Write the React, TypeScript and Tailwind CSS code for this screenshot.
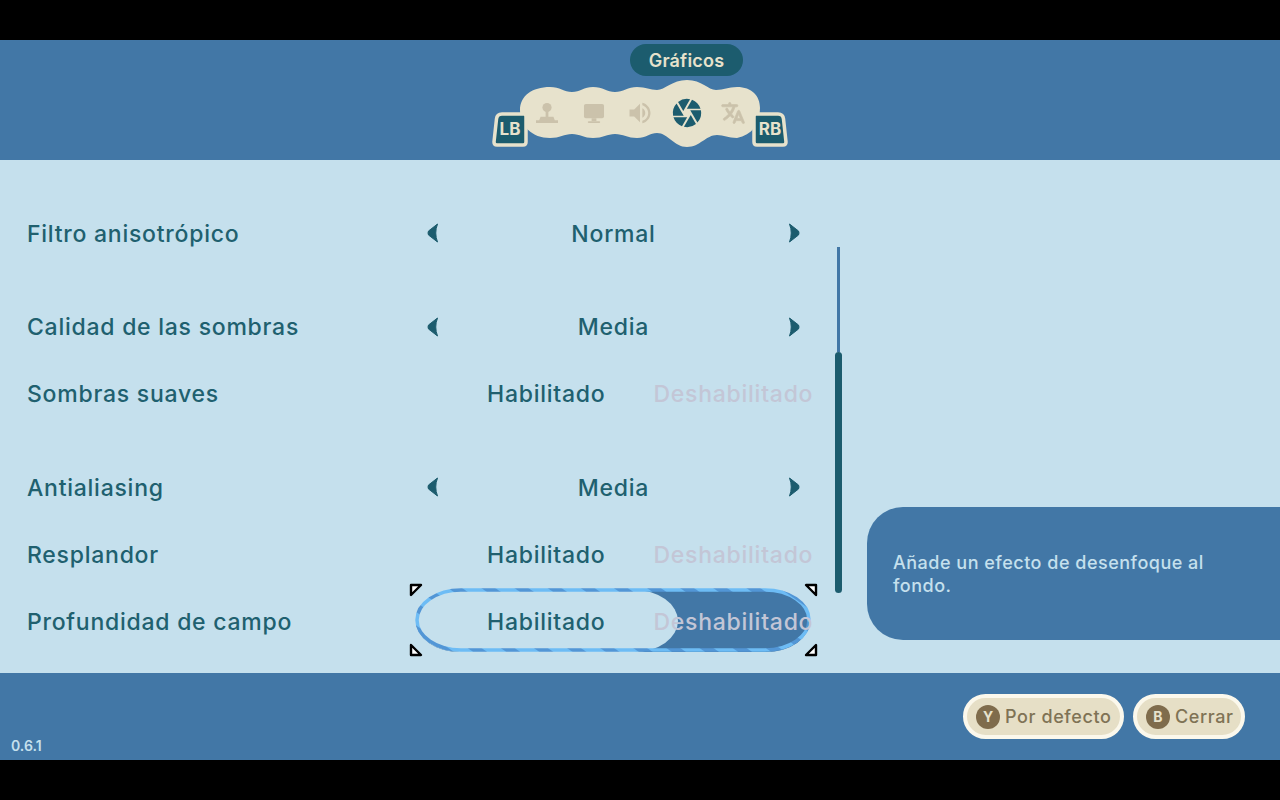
import { IoLanguage } from "react-icons/io5";
import { MdCamera, MdVolumeUp } from "react-icons/md";

type Row = {
  label: string;
  kind: "select" | "toggle";
  value?: string;
  gap?: boolean;
  active?: boolean;
};

const rows: Row[] = [
  { label: "Filtro anisotrópico", kind: "select", value: "Normal" },
  { label: "Calidad de las sombras", kind: "select", value: "Media", gap: true },
  { label: "Sombras suaves", kind: "toggle" },
  { label: "Antialiasing", kind: "select", value: "Media", gap: true },
  { label: "Resplandor", kind: "toggle" },
  { label: "Profundidad de campo", kind: "toggle", active: true },
];

function Arrow({ flip }: { flip?: boolean }) {
  return (
    <svg width="12" height="20" viewBox="0 0 12 20" className={flip ? "rotate-180" : ""}>
      <path
        d="M10.5 1 L1.5 8 Q0.5 10 1.5 12 L10.5 19 Q7 10 10.5 1 Z"
        fill="#1c5c6e"
        stroke="#1c5c6e"
        strokeLinejoin="round"
      />
    </svg>
  );
}

function Corner({ className }: { className: string }) {
  return (
    <svg width="14" height="14" viewBox="0 0 14 14" className={`absolute ${className}`}>
      <path
        d="M2 2 L12 2 L2 12 Z"
        fill="#ffffff"
        stroke="#000000"
        strokeWidth="2.4"
        strokeLinejoin="round"
      />
    </svg>
  );
}

function Toggle({ active }: { active?: boolean }) {
  return (
    <div className="relative flex h-[62px] w-full items-center">
      {active && (
        <>
          <div className="absolute left-px right-[2px] top-0 h-full overflow-hidden rounded-[44px/31px] bg-[#4277a6]">
            <div className="h-full w-[262px] rounded-[44px/31px] bg-[#c5e0ed]" />
          </div>
          <svg
            width="396"
            height="64"
            viewBox="0 0 396 64"
            className="absolute left-0 top-[-2px]"
          >
            <defs>
              <pattern
                id="ring-stripes"
                width="19"
                height="19"
                patternUnits="userSpaceOnUse"
                patternTransform="rotate(-55)"
              >
                <rect width="19" height="19" fill="#6dbcf5" />
                <rect width="8" height="19" fill="#5296d6" />
              </pattern>
            </defs>
            <rect
              x="2"
              y="2"
              width="392"
              height="60"
              rx="44"
              ry="30"
              fill="none"
              stroke="url(#ring-stripes)"
              strokeWidth="3.5"
            />
          </svg>
          <Corner className="-left-[6px] -top-[7px]" />
          <Corner className="-right-[6px] -top-[7px] rotate-90" />
          <Corner className="-bottom-[5px] -left-[6px] -rotate-90" />
          <Corner className="-bottom-[5px] -right-[6px] rotate-180" />
        </>
      )}
      <div className="relative flex items-center gap-[48px] pl-[72px] pt-[2px]">
        <span className="whitespace-nowrap text-[#20606f]">Habilitado</span>
        <span className="whitespace-nowrap text-[#c3c6d6]">Deshabilitado</span>
      </div>
    </div>
  );
}

function Select({ value }: { value?: string }) {
  return (
    <div className="flex w-full items-center justify-between px-[12px]">
      <Arrow />
      <span className="pt-[2px] text-[#20606f]">{value}</span>
      <Arrow flip />
    </div>
  );
}

function Plate({ text, flip }: { text: string; flip?: boolean }) {
  return (
    <div className="relative flex h-[35px] w-[36px] items-center justify-center">
      <svg
        width="36"
        height="35"
        viewBox="0 0 36 35"
        className={`absolute left-0 top-0 ${flip ? "-scale-x-100" : ""}`}
      >
        <path
          d="M10 2 L32 2 Q34 2 34 5 L34 30 Q34 33 31 33 L5 33 Q2 33 2 30 L4.5 7 Q5 2 10 2 Z"
          fill="#1c5c6e"
          stroke="#e7e2cc"
          strokeWidth="3.5"
          strokeLinejoin="round"
        />
      </svg>
      <span className="relative text-[17px] font-bold text-[#e7e2cc]">{text}</span>
    </div>
  );
}

function TabWave() {
  return (
    <svg width="240" height="72" viewBox="520 78 240 72" className="absolute left-0 top-0">
      <path
        fill="#e7e2cc"
        d="M520 110 C520 96 532 87 550 87 C560 87 564 92 572 92 C580 92 584 87 593 87 C603 87 607 92 615 92 C623 92 628 87 637 87 C646 87 650 90 657 90 C665 90 672 80 687 80 C702 80 708 90 716 90 C724 90 728 87 737 87 C752 87 760 96 760 108 C760 124 752 135 737 138 C728 138 724 135 717 135 C706 135 700 147 687 147 C674 147 668 133 657 133 C650 133 646 138 637 138 C628 138 623 134 615 134 C607 134 603 138 593 138 C584 138 580 134 572 134 C564 134 560 138 550 138 C532 138 520 126 520 110 Z"
      />
    </svg>
  );
}

function Tabs() {
  return (
    <div className="flex items-end">
      <div className="z-10 -mr-[8px] pb-[3px]">
        <Plate text="LB" />
      </div>
      <div className="relative h-[72px] w-[240px]">
        <TabWave />
        <div className="relative flex h-full items-center pb-[2px] pl-[4px]">
          <div className="flex w-[46.5px] justify-center">
            <svg width="22" height="24" viewBox="0 0 24 24" fill="#cbc2ab">
              <circle cx="12" cy="6" r="5" />
              <rect x="10.5" y="8" width="3" height="10" />
              <path d="M5 16 H19 L20.5 20 H24 V23 H0 V20 H3.5 Z" />
            </svg>
          </div>
          <div className="flex w-[46.5px] justify-center">
            <svg width="22" height="21" viewBox="0 0 23 22" fill="#cbc2ab">
              <rect x="1" y="1" width="21" height="15" rx="2" />
              <rect x="9" y="16" width="5" height="3" />
              <rect x="5" y="19" width="13" height="2" rx="1" />
            </svg>
          </div>
          <div className="flex w-[46.5px] justify-center">
            <MdVolumeUp size={28} color="#cbc2ab" />
          </div>
          <div className="flex w-[46.5px] justify-center">
            <MdCamera size={34} color="#1c5c6e" />
          </div>
          <div className="flex w-[46.5px] justify-center">
            <IoLanguage size={26} color="#cbc2ab" stroke="#cbc2ab" strokeWidth={14} />
          </div>
        </div>
      </div>
      <div className="z-10 -ml-[8px] pb-[3px]">
        <Plate text="RB" flip />
      </div>
    </div>
  );
}

function FooterButton({ glyph, label, width }: { glyph: string; label: string; width: string }) {
  return (
    <div
      className={`flex h-[45px] items-center gap-[5px] rounded-full border-[4px] border-[#fbf8ec] bg-[#e6dfc6] pl-[9px] text-[18px] font-medium tracking-[0.6px] text-[#7f7355] ${width}`}
    >
      <span className="flex h-[24px] w-[24px] items-center justify-center rounded-full bg-[#7f6c4c] text-[14px] font-bold tracking-normal text-[#e7e2cc]">
        {glyph}
      </span>
      <span>{label}</span>
    </div>
  );
}

export default function App() {
  return (
    <div className="flex h-screen flex-col bg-black py-10 font-['Inter','Liberation_Sans',sans-serif] font-medium">
      <header className="flex h-[120px] flex-col items-center bg-[#4277a6] pt-[4px]">
        <div className="ml-[93px] flex h-[32px] w-[113px] items-center justify-center rounded-full bg-[#1c5c6e] pt-px text-[18px] font-semibold tracking-[0.2px] text-[#e7e2cc]">
          Gráficos
        </div>
        <div className="mt-[2px]">
          <Tabs />
        </div>
      </header>

      <main className="flex min-h-0 flex-1 bg-[#c5e0ed]">
        <div className="flex w-[835px] flex-col pt-[39.5px] text-[23px] tracking-[0.75px]">
          {rows.map((row) => (
            <div
              key={row.label}
              className={`flex h-[67px] shrink-0 items-center pl-[27px] pr-[23px] ${row.gap ? "mt-[26.5px]" : ""}`}
            >
              <span className="flex-1 whitespace-nowrap pt-[2px] text-[#20606f]">{row.label}</span>
              <div className="w-[397px] shrink-0">
                {row.kind === "select" ? <Select value={row.value} /> : <Toggle active={row.active} />}
              </div>
            </div>
          ))}
        </div>

        <div className="mt-[87px] flex h-[346px] w-[7px] shrink-0 flex-col items-center">
          <div className="w-[3px] flex-1 bg-[#4277a6]" />
          <div className="h-[241px] w-[7px] rounded-full bg-[#1c5c6e]" />
        </div>

        <div className="ml-[25px] mt-[347px] h-[133px] flex-1 rounded-l-[36px] bg-[#4277a6] pl-[26px] pr-[70px] pt-[44px] text-[18px] leading-[23px] tracking-[0.5px] text-[#c5e0ed]">
          Añade un efecto de desenfoque al fondo.
        </div>
      </main>

      <footer className="flex h-[87px] items-start justify-between bg-[#4277a6] pl-[11px] pr-[35px] pt-[21px]">
        <span className="self-end pb-[4px] text-[14px] font-semibold text-[#c5e0ed]">0.6.1</span>
        <div className="flex gap-[9px]">
          <FooterButton glyph="Y" label="Por defecto" width="w-[161px]" />
          <FooterButton glyph="B" label="Cerrar" width="w-[112px]" />
        </div>
      </footer>
    </div>
  );
}
